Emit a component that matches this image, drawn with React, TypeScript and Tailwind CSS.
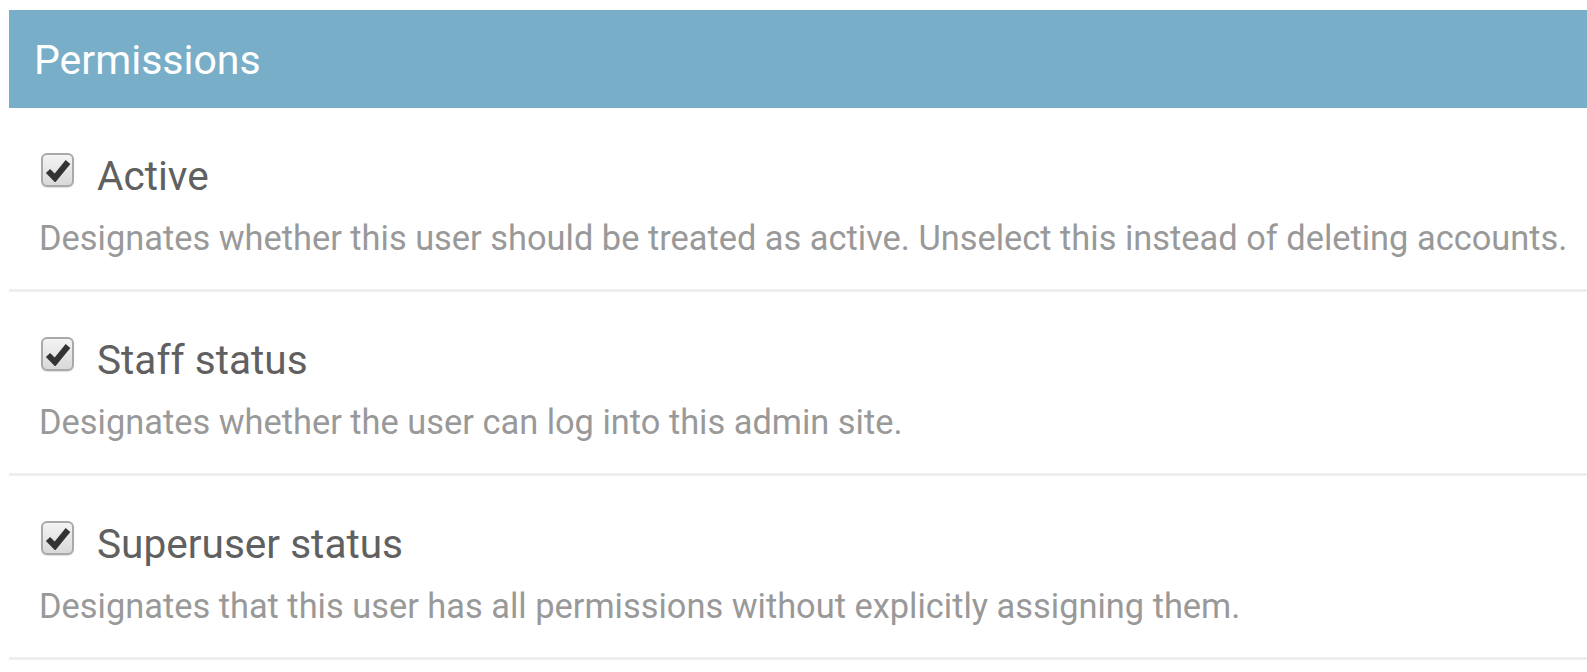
import React from "react";

type Perm = { label: string; help: string };

const perms: Perm[] = [
  {
    label: "Active",
    help: "Designates whether this user should be treated as active. Unselect this instead of deleting accounts.",
  },
  { label: "Staff status", help: "Designates whether the user can log into this admin site." },
  {
    label: "Superuser status",
    help: "Designates that this user has all permissions without explicitly assigning them.",
  },
];

function CheckedBox() {
  return (
    <span className="ml-[2px] flex h-[34px] w-[33px] shrink-0 items-center justify-center rounded-[6px] border-2 border-[#a9a9a9] bg-gradient-to-b from-[#f4f4f4] to-[#d9d9d9] shadow-[0_1px_1px_rgba(0,0,0,0.12)]">
      <svg width="26" height="24" viewBox="0 0 26 24">
        <path d="M3 13 L10 20 L23 4" fill="none" stroke="#333" strokeWidth="6" strokeLinejoin="miter" strokeLinecap="butt" />
      </svg>
    </span>
  );
}

export default function App() {
  return (
    <div className="min-h-screen bg-white pl-[9px] pt-[10px] font-['Roboto',sans-serif]">
      <h2 className="bg-[#79aec8] pl-[25px] pt-[26px] pb-[24px] text-[41px] leading-[48px] font-normal text-white">
        Permissions
      </h2>
      {perms.map((p) => (
        <div key={p.label} className="border-b-[3px] border-[#eeeeee] pl-[30px] pt-[45px] pb-[31px]">
          <div className="flex items-start gap-[23px]">
            <CheckedBox />
            <span className="text-[40.6px] leading-[46px] text-[#606060]">{p.label}</span>
          </div>
          <p className="mt-[19px] text-[34.4px] leading-[40px] text-[#999]">{p.help}</p>
        </div>
      ))}
    </div>
  );
}
